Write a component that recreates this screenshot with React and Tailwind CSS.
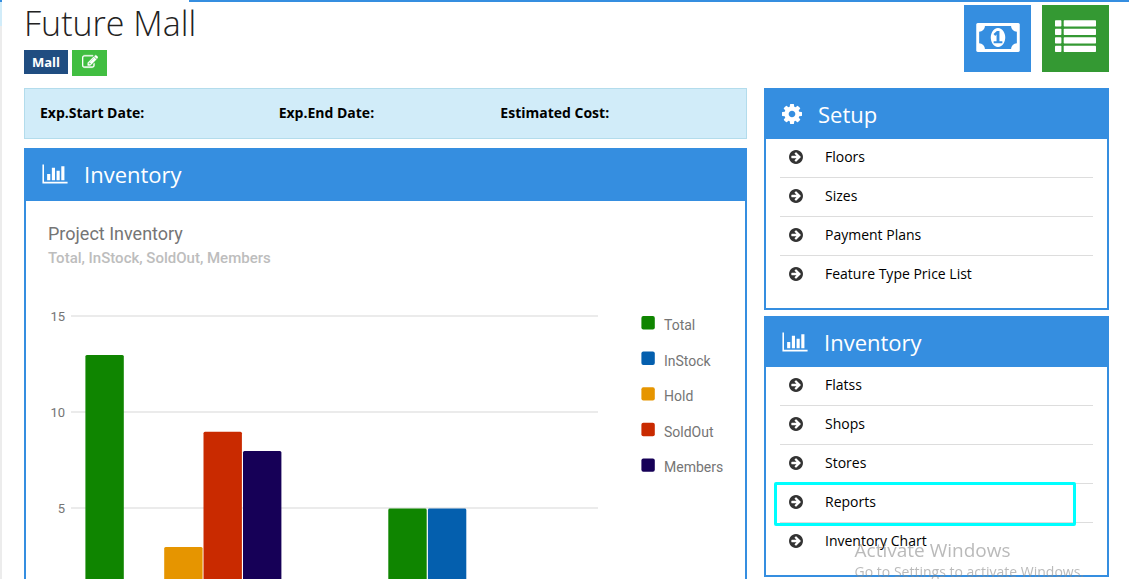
import React from "react";

const setupLinks = ["Floors", "Sizes", "Payment Plans", "Feature Type Price List"];
const inventoryLinks = ["Flatss", "Shops", "Stores", "Reports", "Inventory Chart"];

const legend = [
  { label: "Total", color: "#0f8500" },
  { label: "InStock", color: "#045fae" },
  { label: "Hold", color: "#e69500" },
  { label: "SoldOut", color: "#c92a00" },
  { label: "Members", color: "#160057" },
];

const bars = [
  { x: 59.4, value: 13, color: "#0f8500" },
  { x: 138.2, value: 3, color: "#e69500" },
  { x: 177.5, value: 9, color: "#c92a00" },
  { x: 217, value: 8, color: "#160057" },
  { x: 362.3, value: 5, color: "#0f8500" },
  { x: 401.9, value: 5, color: "#045fae" },
];

const CHART_ZERO = 403;
const UNIT = 19.2;

const BarChartIcon = () => (
  <svg viewBox="0 0 2048 1792" className="h-[22px] w-[26px] shrink-0" fill="currentColor" aria-hidden="true">
    <path d="M640 896v512h-256v-512h256zm384-512v1024h-256v-1024h256zm1024 1152v128h-2048v-1536h128v1408h1920zm-640-896v768h-256v-768h256zm384-384v1152h-256v-1152h256z" />
  </svg>
);

const CogIcon = () => (
  <svg viewBox="128 128 1536 1536" className="size-5 shrink-0" fill="currentColor" aria-hidden="true">
    <path d="M1152 896q0-106-75-181t-181-75-181 75-75 181 75 181 181 75 181-75 75-181zm512-109v222q0 12-8 23t-20 13l-185 28q-19 54-39 91 35 50 107 138 10 12 10 25t-9 23q-27 37-99 108t-94 71q-12 0-26-9l-138-108q-44 23-91 38-16 136-29 186-7 28-36 28h-222q-14 0-24.5-8.5t-11.5-21.5l-28-184q-49-16-90-37l-141 107q-10 9-25 9-14 0-25-11-126-114-165-168-7-10-7-23 0-12 8-23 15-21 51-66.5t54-70.5q-27-50-41-99l-183-27q-13-2-21-12.5t-8-23.5v-222q0-12 8-23t19-13l186-28q14-46 39-92-40-57-107-138-10-12-10-24 0-10 9-23 26-36 98.5-107.5t94.5-71.5q13 0 26 10l138 107q44-23 91-38 16-136 29-186 7-28 36-28h222q14 0 24.5 8.5t11.5 21.5l28 184q49 16 90 37l142-107q9-9 24-9 13 0 25 10 129 119 165 170 7 8 7 22 0 12-8 23-15 21-51 66.5t-54 70.5q26 50 41 98l183 28q13 2 21 12.5t8 23.5z" />
  </svg>
);

const ArrowIcon = () => (
  <svg viewBox="128 128 1536 1536" className="size-3.5 shrink-0 text-[#333]" fill="currentColor" aria-hidden="true">
    <path d="M1413 896q0-27-18-45l-91-91-362-362q-18-18-45-18t-45 18l-91 91q-18 18-18 45t18 45l189 189h-502q-26 0-45 19t-19 45v128q0 26 19 45t45 19h502l-189 189q-19 19-19 45t19 45l91 91q18 18 45 18t45-18l362-362 91-91q18-18 18-45zm251 0q0 209-103 385.5t-279.5 279.5-385.5 103-385.5-103-279.5-279.5-103-385.5 103-385.5 279.5-279.5 385.5-103 385.5 103 279.5 279.5 103 385.5z" />
  </svg>
);

const EditIcon = () => (
  <svg viewBox="0 0 1792 1792" className="size-4" fill="currentColor" stroke="currentColor" strokeWidth="40" aria-hidden="true">
    <path d="M888 1184l116-116-152-152-116 116v56h96v96h56zm440-720q-16-16-33 1l-350 350q-17 17-1 33t33-1l350-350q17-17 1-33zm80 594v190q0 119-84.5 203.5t-203.5 84.5h-832q-119 0-203.5-84.5t-84.5-203.5v-832q0-119 84.5-203.5t203.5-84.5h832q63 0 117 25 15 7 18 23 3 17-9 29l-49 49q-14 14-32 8-23-6-45-6h-832q-66 0-113 47t-47 113v832q0 66 47 113t113 47h832q66 0 113-47t47-113v-126q0-13 9-22l64-64q15-15 35-7t20 29zm-96-738l288 288-672 672h-288v-288zm444 132l-92 92-288-288 92-92q28-28 68-28t68 28l152 152q28 28 28 68t-28 68z" />
  </svg>
);

const MoneyIcon = () => (
  <svg viewBox="0 256 1920 1280" className="h-[29px] w-11" fill="currentColor" aria-hidden="true">
    <path d="M768 1152h384v-96h-128v-448h-114l-148 137 77 80q42-37 55-57h2v288h-128v96zm512-256q0 70-21 142t-59.5 134-101.5 101-138 39-138-39-101.5-101-59.5-134-21-142 21-142 59.5-134 101.5-101 138-39 138 39 101.5 101 59.5 134 21 142zm512 256v-512q-106 0-181-75t-75-181h-1152q0 106-75 181t-181 75v512q106 0 181 75t75 181h1152q0-106 75-181t181-75zm128-832v1152q0 26-19 45t-45 19h-1792q-26 0-45-19t-19-45v-1152q0-26 19-45t45-19h1792q26 0 45 19t19 45z" />
  </svg>
);

const ListIcon = () => (
  <svg viewBox="0 0 41 32" className="h-8 w-[41px]" fill="currentColor" aria-hidden="true">
    {[0.2, 8.7, 17.2, 25.7].map((y) => (
      <g key={y}>
        <rect x="0" y={y} width="6.4" height="6.3" rx="0.7" />
        <rect x="8.7" y={y} width="32.3" height="6.3" rx="0.7" />
      </g>
    ))}
  </svg>
);

const InventoryChart = () => (
  <svg viewBox="0 0 719 430" className="block w-full" fontFamily="Roboto, sans-serif" role="img" aria-label="Project Inventory">
    <text x="22" y="39" fontSize="18" fill="#757575">
      Project Inventory
    </text>
    <text x="22" y="62" fontSize="15" fontWeight="500" fill="#bdbdbd">
      Total, InStock, SoldOut, Members
    </text>

    {[15, 10, 5, 0].map((tick) => (
      <g key={tick}>
        <rect x="45" y={CHART_ZERO - tick * UNIT - 1} width="527" height="2" fill="#ebebeb" />
        {tick > 0 && (
          <text x="39" y={CHART_ZERO - tick * UNIT + 5} fontSize="13" fill="#757575" textAnchor="end">
            {tick}
          </text>
        )}
      </g>
    ))}

    {bars.map((bar) => (
      <rect
        key={bar.x}
        x={bar.x}
        y={CHART_ZERO - bar.value * UNIT + 0.6}
        width="38.4"
        height={bar.value * UNIT}
        rx="1.5"
        fill={bar.color}
      />
    ))}

    {legend.map((item, i) => (
      <g key={item.label}>
        <rect x="615.4" y={115 + i * 35.6} width="13.4" height="13.4" rx="2" fill={item.color} />
        <text x="638" y={129 + i * 35.6} fontSize="14" fill="#757575">
          {item.label}
        </text>
      </g>
    ))}
  </svg>
);

const PanelHeader = ({ icon, title, className }) => (
  <div className={`flex items-center bg-[#358ee0] px-4 text-white ${className}`}>
    {icon}
    <h2 className="text-[22px] leading-8">{title}</h2>
  </div>
);

const LinkPanel = ({ icon, title, links, highlighted }) => (
  <section className="border-2 border-t-0 border-[#358ee0] bg-white">
    <PanelHeader icon={icon} title={title} className="h-[51px] gap-4" />
    <ul className="px-3.5 pb-[13px]">
      {links.map((link) => (
        <li key={link} className="relative border-b border-[#ddd] last:border-transparent">
          <a href="#" className="flex items-center gap-[22px] px-[9px] pt-2 pb-2.5 text-sm text-black">
            <ArrowIcon />
            {link}
          </a>
          {link === highlighted && (
            <span className="pointer-events-none absolute -top-0.5 right-[17px] -bottom-1 -left-1.5 rounded-xs border-3 border-[#00ffff]" />
          )}
        </li>
      ))}
    </ul>
  </section>
);

const App = () => {
  return (
    <div className="flex h-screen overflow-hidden bg-white font-['Open_Sans',sans-serif] text-black">
      <div className="flex w-0.5 shrink-0 flex-col bg-[#ececec]">
        <div className="h-0.5 bg-[#358ee0]" />
        <div className="h-6 bg-[#d1ecf9]" />
      </div>

      <div className="min-w-0 flex-1">
        <div className="ml-[187px] h-0.5 bg-[#358ee0]" />

        <div className="pr-5 pl-[22px]">
          <header className="flex h-[86px] items-start justify-between">
            <div>
              <h1 className="text-[34px] leading-[42px] font-light text-[#222]">Future Mall</h1>
              <div className="mt-1.5 flex items-start gap-1">
                <span className="bg-[#204d81] px-2 text-[13px] leading-6 font-bold text-white">Mall</span>
                <button type="button" aria-label="Edit" className="flex h-[26px] w-[35px] items-center justify-center bg-[#41be41] pb-0.5 text-white">
                  <EditIcon />
                </button>
              </div>
            </div>
            <div className="mt-[3px] flex gap-[11px]">
              <button type="button" aria-label="Payments" className="flex size-[67px] items-center justify-center bg-[#358ee0] pb-0.5 text-white">
                <MoneyIcon />
              </button>
              <button type="button" aria-label="List" className="flex size-[67px] items-center justify-center bg-[#349933] pb-1.5 text-white">
                <ListIcon />
              </button>
            </div>
          </header>

          <div className="grid grid-cols-[723fr_345fr] items-start gap-[17px]">
            <div className="flex flex-col gap-[9px]">
              <div className="grid grid-cols-[239fr_222fr_231fr] border border-[#b3dcec] bg-[#d1ecf9] px-[15px] pt-[13px] pb-[15px] text-sm leading-[21px] font-bold">
                <span>Exp.Start Date:</span>
                <span>Exp.End Date:</span>
                <span>Estimated Cost:</span>
              </div>
              <section className="border-2 border-t-0 border-[#358ee0]">
                <PanelHeader icon={<BarChartIcon />} title="Inventory" className="h-[53px] gap-4 pb-0.5" />
                <InventoryChart />
              </section>
            </div>

            <div className="flex flex-col gap-1.5">
              <LinkPanel icon={<CogIcon />} title="Setup" links={setupLinks} />
              <LinkPanel
                icon={<BarChartIcon />}
                title="Inventory"
                links={inventoryLinks}
                highlighted="Reports"
              />
            </div>
          </div>
        </div>
      </div>

      <div className="pointer-events-none fixed right-[45px] -bottom-[3px] text-[#8c8c8c]/60">
        <p className="text-[19px] leading-6">Activate Windows</p>
        <p className="text-sm leading-5">Go to Settings to activate Windows.</p>
      </div>
    </div>
  );
};

export default App;
